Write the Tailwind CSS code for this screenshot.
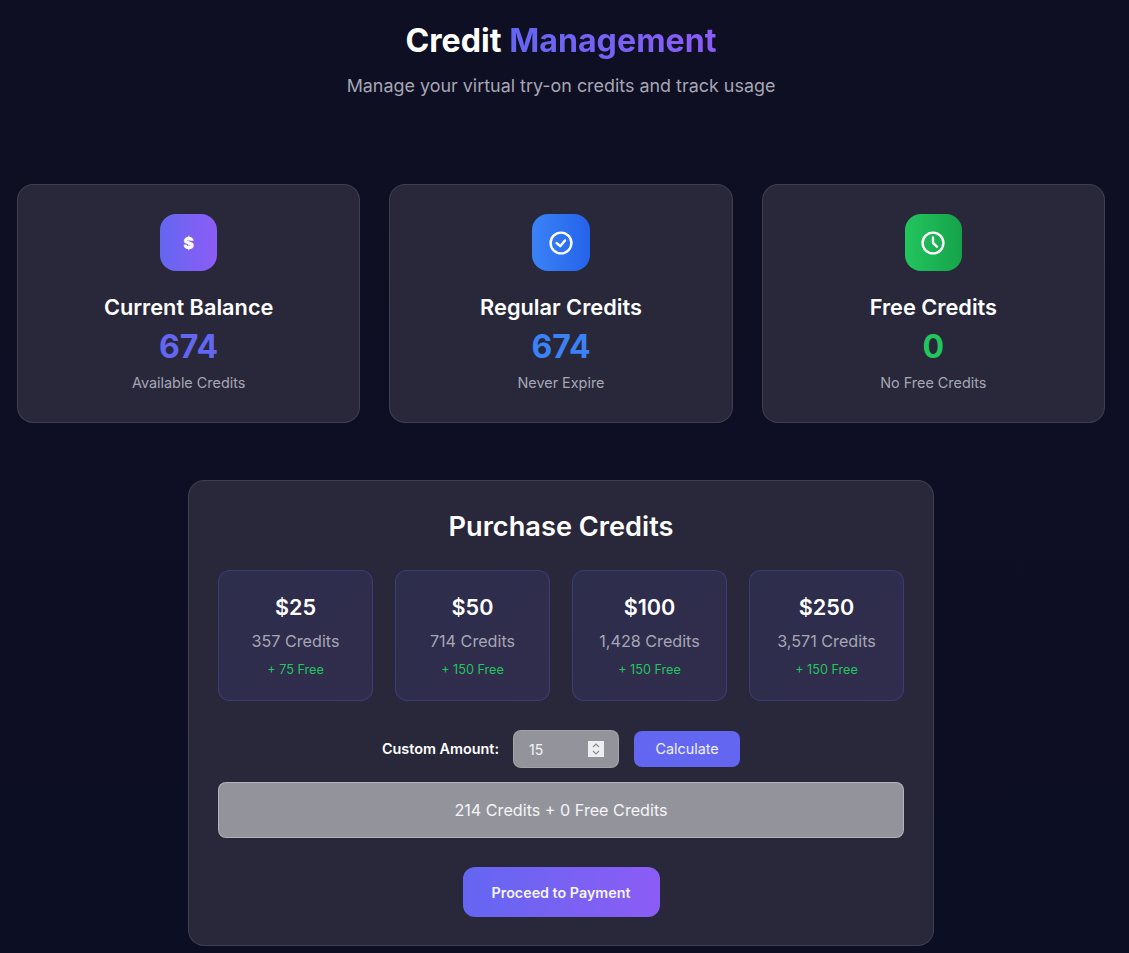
<!DOCTYPE html>
<html lang="en">
<head>
    <meta charset="UTF-8">
    <meta name="viewport" content="width=device-width, initial-scale=1.0">
    <title>Credit Management</title>
    <script src="https://cdn.jsdelivr.net/npm/@tailwindcss/browser@4"></script>
</head>
<body class="bg-gradient-to-b from-[#0f0f23] to-[#0c0e24] h-[953px] overflow-hidden font-['Inter',sans-serif] text-white">
    <div class="w-[1122px] px-[17px]">
        <!-- Header -->
        <div class="text-center pt-[21px]">
            <h1 class="text-[32.2px] leading-[40px] font-bold">Credit <span class="bg-gradient-to-r from-[#6366f1] to-[#8b5cf6] bg-clip-text text-transparent">Management</span></h1>
            <p class="mt-[5px] text-[17.92px] leading-[40px] text-[#a6a6b4] h-[40px]">Manage your virtual try-on credits and track usage</p>
        </div>

        <!-- Balance cards -->
        <div class="grid grid-cols-3 gap-[29px] mt-[78px]">
            <div class="h-[239px] rounded-2xl border border-white/10 bg-[#28283a] flex flex-col items-center pt-[29px]">
                <div class="w-[57px] h-[57px] rounded-2xl bg-gradient-to-r from-[#6366f1] to-[#8b5cf6] flex items-center justify-center text-[16px] font-black">$</div>
                <h3 class="mt-[22px] text-[21.76px] leading-[28px] font-semibold">Current Balance</h3>
                <div class="mt-[6px] text-[32px] leading-[40px] font-bold text-[#6366f1]">674</div>
                <p class="mt-[6px] text-[14.4px] leading-[20px] text-[#a6a6b4]">Available Credits</p>
            </div>
            <div class="h-[239px] rounded-2xl border border-white/10 bg-[#28283a] flex flex-col items-center pt-[29px]">
                <div class="w-[58px] h-[57px] rounded-2xl bg-gradient-to-r from-[#3b82f6] to-[#2563eb] flex items-center justify-center">
                    <svg class="w-6 h-6" viewBox="0 0 24 24" fill="none" stroke="white" stroke-width="2.4" stroke-linecap="round" stroke-linejoin="round"><circle cx="12" cy="12" r="10.4"/><path d="M7.6 12l3.6 3.2L16 9.4"/></svg>
                </div>
                <h3 class="mt-[22px] text-[21.76px] leading-[28px] font-semibold">Regular Credits</h3>
                <div class="mt-[6px] text-[32px] leading-[40px] font-bold text-[#3b82f6]">674</div>
                <p class="mt-[6px] text-[14.4px] leading-[20px] text-[#a6a6b4]">Never Expire</p>
            </div>
            <div class="h-[239px] rounded-2xl border border-white/10 bg-[#28283a] flex flex-col items-center pt-[29px]">
                <div class="w-[57px] h-[57px] rounded-2xl bg-gradient-to-r from-[#22c55e] to-[#16a34a] flex items-center justify-center">
                    <svg class="w-6 h-6" viewBox="0 0 24 24" fill="none" stroke="white" stroke-width="2.4" stroke-linecap="round" stroke-linejoin="round"><circle cx="12" cy="12" r="10.4"/><path d="M12 6.5V12l4 3.7"/></svg>
                </div>
                <h3 class="mt-[22px] text-[21.76px] leading-[28px] font-semibold">Free Credits</h3>
                <div class="mt-[6px] text-[32px] leading-[40px] font-bold text-[#22c55e]">0</div>
                <p class="mt-[6px] text-[14.4px] leading-[20px] text-[#a6a6b4]">No Free Credits</p>
            </div>
        </div>

        <!-- Purchase -->
        <div class="w-[746px] h-[466px] mx-auto mt-[57px] rounded-2xl border border-white/10 bg-[#28283a] px-[29px] pt-[30px]">
            <h2 class="text-center text-[27.2px] leading-[32px] font-semibold">Purchase Credits</h2>
            <div class="grid grid-cols-4 gap-[22px] mt-[27px]">
                <div class="h-[131px] rounded-xl border border-[#6366f1]/25 bg-gradient-to-br from-[#6366f1]/10 to-[#8b5cf6]/10 flex flex-col items-center pt-[21px]">
                    <div class="text-[21.6px] leading-[30px] font-semibold">$25</div>
                    <div class="mt-[7px] text-[16.16px] leading-[24px] text-[#a6a6b4]">357 Credits</div>
                    <div class="mt-[9px] text-[12.64px] leading-[16px] text-[#22c55e]">+ 75 Free</div>
                </div>
                <div class="h-[131px] rounded-xl border border-[#6366f1]/25 bg-gradient-to-br from-[#6366f1]/10 to-[#8b5cf6]/10 flex flex-col items-center pt-[21px]">
                    <div class="text-[21.6px] leading-[30px] font-semibold">$50</div>
                    <div class="mt-[7px] text-[16.16px] leading-[24px] text-[#a6a6b4]">714 Credits</div>
                    <div class="mt-[9px] text-[12.64px] leading-[16px] text-[#22c55e]">+ 150 Free</div>
                </div>
                <div class="h-[131px] rounded-xl border border-[#6366f1]/25 bg-gradient-to-br from-[#6366f1]/10 to-[#8b5cf6]/10 flex flex-col items-center pt-[21px]">
                    <div class="text-[21.6px] leading-[30px] font-semibold">$100</div>
                    <div class="mt-[7px] text-[16.16px] leading-[24px] text-[#a6a6b4]">1,428 Credits</div>
                    <div class="mt-[9px] text-[12.64px] leading-[16px] text-[#22c55e]">+ 150 Free</div>
                </div>
                <div class="h-[131px] rounded-xl border border-[#6366f1]/25 bg-gradient-to-br from-[#6366f1]/10 to-[#8b5cf6]/10 flex flex-col items-center pt-[21px]">
                    <div class="text-[21.6px] leading-[30px] font-semibold">$250</div>
                    <div class="mt-[7px] text-[16.16px] leading-[24px] text-[#a6a6b4]">3,571 Credits</div>
                    <div class="mt-[9px] text-[12.64px] leading-[16px] text-[#22c55e]">+ 150 Free</div>
                </div>
            </div>

            <!-- Custom amount -->
            <div class="flex items-center justify-center mt-[29px]">
                <label class="text-[14.4px] font-semibold mr-[14px]">Custom Amount:</label>
                <div class="relative w-[106px] h-[38px] rounded-lg border border-white/15 bg-[#93939b] flex items-center pl-[15px] text-[14px] text-white/90">
                    <span>15</span>
                    <div class="absolute right-[14px] top-[10px] w-4 h-4 bg-[#eeeef0] flex items-center justify-center">
                        <svg class="w-[10px] h-[14px]" viewBox="0 0 10 14" fill="none" stroke="#8a8a90" stroke-width="1.1"><path d="M2 5l3-3 3 3M2 9l3 3 3-3"/></svg>
                    </div>
                </div>
                <button class="ml-[15px] w-[106px] h-[36px] rounded-lg bg-[#6366f1] text-[14.4px] text-white/90">Calculate</button>
            </div>

            <div class="mt-[14px] h-[56px] rounded-lg border border-white/30 bg-[#93939b] flex items-center justify-center text-[16.16px] text-white/90">214 Credits + 0 Free Credits</div>

            <div class="flex justify-center mt-[29px]">
                <button class="w-[197px] h-[50px] pt-px rounded-xl bg-gradient-to-r from-[#6366f1] to-[#8b5cf6] text-[14.3px] font-semibold text-white/95">Proceed to Payment</button>
            </div>
        </div>
    </div>
</body>
</html>
